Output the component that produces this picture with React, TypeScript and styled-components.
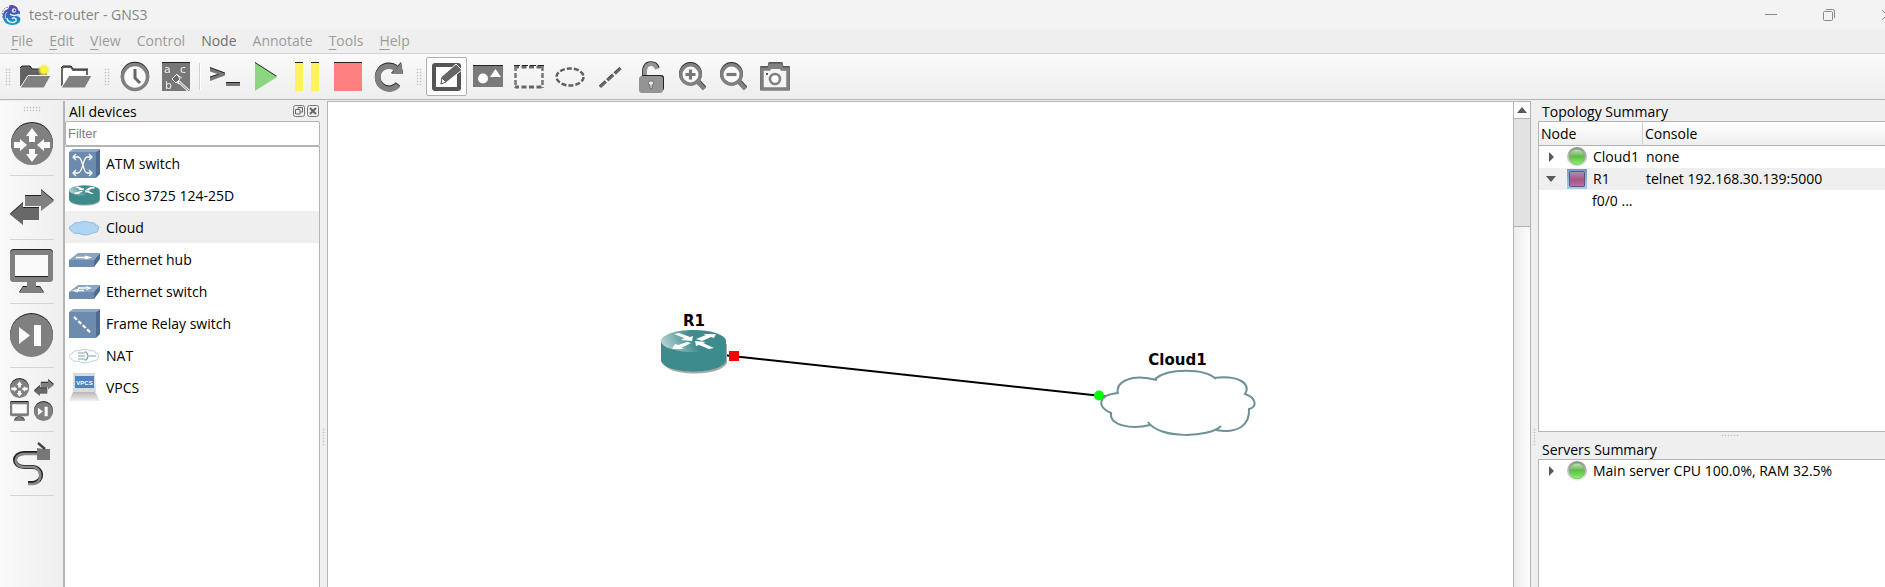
import React from 'react';
import styled, { createGlobalStyle, css } from 'styled-components';

const line = '#b4b4b4';

const GlobalStyle = createGlobalStyle`
  * { box-sizing: border-box; }
  body {
    margin: 0;
    background: #efefef;
    color: #000;
    font: 14px/20px "Open Sans", "Noto Sans", sans-serif;
    overflow: hidden;
  }
  button {
    border: 0;
    padding: 0;
    background: none;
    font: inherit;
    color: inherit;
  }
  svg { display: block; overflow: visible; flex: none; }
`;

const Window = styled.div`
  display: flex;
  flex-direction: column;
  height: 100vh;
  min-width: 900px;
`;

/* ---------- title bar and menu ---------- */

const TitleBar = styled.header`
  display: flex;
  align-items: center;
  gap: 7px;
  height: 29px;
  padding-left: 2px;
  background: #f3f3f3;
  color: #858585;
  overflow: hidden;
`;

const Title = styled.h1`
  flex: 1;
  margin: 0;
  font-size: 14px;
  font-weight: 400;
`;

const WindowButtons = styled.div`
  display: flex;
  margin-right: -31px;
`;

const WindowButton = styled.button`
  display: grid;
  place-items: center;
  width: 58px;
  height: 28px;
`;

const MenuBar = styled.nav`
  display: flex;
  gap: 16px;
  height: 25px;
  padding: 2px 11px;
  border-bottom: 1px solid #d2d2d2;
  background: #efefef;
`;

const MenuItem = styled.button<{ $strong?: boolean }>`
  color: ${(p) => (p.$strong ? '#707070' : '#9c9c9c')};
`;

const Mnemonic = styled.span`
  text-decoration: underline;
  text-underline-offset: 3px;
`;

/* ---------- toolbar ---------- */

const ToolBar = styled.div`
  display: flex;
  align-items: center;
  height: 46px;
  border-bottom: 1px solid ${line};
  background: linear-gradient(#fafafa, #eeeeee);
`;

const dots = css`
  background-image: radial-gradient(circle, #c0c0c0 0 20%, transparent 55%);
  background-size: 3px 3px;
`;

const Grip = styled.div`
  width: 6px;
  height: 18px;
  margin: 0 4px 0 7px;
  ${dots}
  &:first-child { margin: 0 4px 0 5px; }
`;

const ToolSeparator = styled.div`
  width: 2px;
  height: 27px;
  margin: 0 3px;
  border-left: 1px solid #d0d0d0;
  background: #fff;
`;

const ToolButton = styled.button<{ $active?: boolean }>`
  display: grid;
  place-items: center;
  width: 41px;
  height: 39px;
  border: 1px solid ${(p) => (p.$active ? '#b0b0b0' : 'transparent')};
  border-radius: 2px;
  background: ${(p) => (p.$active ? '#fdfdfd' : 'none')};
`;

const Ridge = styled.svg`
  filter: drop-shadow(0 -1px 0 #222);
`;

/* ---------- body ---------- */

const Body = styled.div`
  display: flex;
  flex: 1;
  min-height: 0;
  padding-top: 1px;
`;

const DeviceBar = styled.div`
  display: flex;
  flex-direction: column;
  align-items: center;
  flex: none;
  width: 65px;
  border-right: 2px solid ${line};
  background: linear-gradient(90deg, #fafafa, #eeeeee);
`;

const DeviceGrip = styled.div`
  width: 18px;
  height: 6px;
  margin-top: 5px;
  ${dots}
`;

const DeviceButton = styled.button`
  display: grid;
  place-items: center;
  width: 44px;
  height: 64px;
  border-bottom: 1px solid #d4d4d4;
`;

const MiniGrid = styled.span`
  display: grid;
  grid-template-columns: 20px 20px;
  align-items: center;
  gap: 4px;
`;

const Devices = styled.section`
  display: flex;
  flex-direction: column;
  flex: none;
  width: 255px;
`;

const DockTitle = styled.div`
  display: flex;
  align-items: center;
  gap: 2px;
  height: 20px;
  padding: 0 1px 0 4px;
`;

const DockName = styled.h2`
  flex: 1;
  margin: 0;
  padding-top: 2px;
  font-size: 14px;
  font-weight: 400;
  line-height: 20px;
`;

const Filter = styled.input`
  height: 25px;
  padding: 0 2px;
  border: 1px solid ${line};
  border-radius: 2px;
  outline: 0;
  font: 13px/20px "Liberation Sans", sans-serif;
  &::placeholder { color: #808080; opacity: 1; }
`;

const DeviceList = styled.ul`
  flex: 1;
  margin: 0;
  padding: 0;
  list-style: none;
  border: 1px solid ${line};
  border-left: 0;
  border-bottom: 0;
  background: #fff;
`;

const DeviceRow = styled.li<{ $selected?: boolean }>`
  display: flex;
  align-items: center;
  gap: 6px;
  height: 32px;
  padding: 1px 0 0 4px;
  background: ${(p) => (p.$selected ? '#efefef' : 'none')};
`;

const Splitter = styled.div`
  display: flex;
  justify-content: center;
  flex: none;
  width: 7px;
  padding-top: 327px;
  &::after {
    content: '';
    width: 3px;
    height: 18px;
    ${dots}
  }
`;

/* ---------- canvas ---------- */

const CanvasFrame = styled.main`
  display: flex;
  flex: 1;
  min-width: 0;
  border: 1px solid ${line};
  border-bottom: 0;
  background: #fff;
`;

const Scene = styled.div`
  position: relative;
  flex: 1;
  overflow: hidden;
`;

const Link = styled.svg`
  position: absolute;
  left: 0;
  top: 0;
`;

const Node = styled.div<{ $x: number; $y: number }>`
  position: absolute;
  left: ${(p) => p.$x}px;
  top: ${(p) => p.$y}px;
  display: flex;
  flex-direction: column;
  align-items: center;
  font: bold 15px/18px "DejaVu Sans", sans-serif;
`;

const ScrollBar = styled.div`
  display: flex;
  flex-direction: column;
  flex: none;
  width: 17px;
  border-left: 1px solid ${line};
  background: linear-gradient(90deg, #ededed, #fdfdfd);
`;

const ScrollUp = styled.button`
  display: grid;
  place-items: center;
  height: 17px;
  border-bottom: 1px solid ${line};
  background: #fbfbfb;
`;

const ScrollThumb = styled.div`
  height: 108px;
  border-bottom: 1px solid ${line};
  background: #e2e2e2;
`;

/* ---------- right dock ---------- */

const RightDock = styled.aside`
  display: flex;
  flex-direction: column;
  flex: none;
  width: 347px;
`;

const Panel = styled.div<{ $height?: number }>`
  ${(p) => (p.$height ? `flex: 0 1 ${p.$height}px;` : 'flex: 1;')}
  border: 1px solid ${line};
  border-right: 0;
  ${(p) => (p.$height ? '' : 'border-bottom: 0;')}
  background: #fff;
  overflow: hidden;
`;

const RowGrip = styled.div`
  width: 18px;
  height: 3px;
  margin: 2px 0 2px 183px;
  ${dots}
`;

const Table = styled.table`
  width: 100%;
  border-collapse: separate;
  border-spacing: 0;
  table-layout: fixed;
`;

const HeadCell = styled.th<{ $width?: number }>`
  ${(p) => (p.$width ? `width: ${p.$width}px;` : '')}
  height: 24px;
  padding: 1px 2px 0;
  border-bottom: 1px solid ${line};
  border-left: ${(p) => (p.$width ? '0' : '1px solid #d0d0d0')};
  background: linear-gradient(#ffffff, #eeeeee);
  font-weight: 400;
  text-align: left;
`;

const Row = styled.tr<{ $selected?: boolean }>`
  background: ${(p) => (p.$selected ? '#efefef' : 'none')};
`;

const Cell = styled.td`
  height: 22px;
  padding: 0 0 0 4px;
  white-space: nowrap;
`;

const TreeCell = styled.div<{ $child?: boolean }>`
  display: flex;
  align-items: center;
  gap: 6px;
  height: ${(p) => (p.$child ? '20px' : '22px')};
  padding-left: ${(p) => (p.$child ? '49px' : '0')};
`;

const ServerRow = styled(TreeCell)`
  padding-left: 4px;
`;

const Expander = styled.button`
  display: grid;
  place-items: center;
  width: 16px;
  height: 20px;
  margin-right: 2px;
`;

/* ---------- drawings ---------- */

const G = '#808080';

const Logo = () => (
  <svg width="20" height="22" viewBox="0 0 20 22" aria-hidden="true">
    <defs>
      <linearGradient id="logo" x1="0" y1="0" x2="0" y2="1">
        <stop offset="0" stopColor="#6a3bb5" />
        <stop offset="0.5" stopColor="#3468b4" />
        <stop offset="1" stopColor="#10a5c8" />
      </linearGradient>
    </defs>
    <path d="M8 1C13 1 16 3 16 6c2 1 3 3 1 5l-3 1c4 0 5 3 4 5-1 3-5 4-8 4C4 21 1 17 1 12 1 8 3 6 6 5 7 4 7 2 8 1z" fill="url(#logo)" />
    <path d="M1 14c-2-5 0-10 5-11l3-2" fill="none" stroke="#8d7cd0" strokeWidth="1" strokeDasharray="2 1" />
    <circle cx="12" cy="6.500" r="2.200" fill="#dfe6f6" />
    <circle cx="12.500" cy="6.500" r="1" fill="#3b4aa8" />
    <path d="M8 10c2 2 6 2 9 0M5 14c0 4 6 6 9 3 1-3-3-4-4-2" fill="none" stroke="#eef6fb" strokeWidth="1.300" />
    <path d="M5 8c-2 2-2 5-1 7" fill="none" stroke="#cbd9f3" strokeWidth="1" />
  </svg>
);

const FolderBack = ({ solid }: { solid?: boolean }) => (
  <>
    <path d="M1 20V3l1-2h8l2 3h14v6" fill={solid ? '#626262' : '#fff'} stroke="#666" strokeWidth="2" />
    <path d="M0 2l2-2h8l2 3h15" fill="none" stroke="#2b2b2b" strokeWidth="1" />
    <path d="M8 9.500h23L24 22H0z" fill={G} stroke="#f4f4f4" strokeWidth="1" />
  </>
);

const NewFolder = () => (
  <svg width="31" height="22" viewBox="0 0 31 22">
    <defs>
      <radialGradient id="glow">
        <stop offset="0" stopColor="#fdf83a" />
        <stop offset="0.500" stopColor="#f8ee3c" />
        <stop offset="1" stopColor="#f5ee50" stopOpacity="0" />
      </radialGradient>
    </defs>
    <FolderBack solid />
    <circle cx="24" cy="4" r="6.500" fill="url(#glow)" />
  </svg>
);

const OpenFolder = () => (
  <svg width="31" height="22" viewBox="0 0 31 22"><FolderBack /></svg>
);

const Clock = () => (
  <Ridge width="28" height="28" viewBox="0 0 28 28">
    <circle cx="14" cy="14" r="12.500" fill="#fafafa" stroke={G} strokeWidth="3.500" />
    <path d="M14 6v9l5 5" fill="none" stroke="#666" strokeWidth="3" />
  </Ridge>
);

const Labels = () => (
  <Ridge width="28" height="28" viewBox="0 0 28 28">
    <path d="M0 0h28v28H0z" fill="#777" />
    <g fill="#eee" fontFamily="DejaVu Sans" fontSize="11">
      <text x="2" y="10">a</text>
      <text x="18" y="10">c</text>
      <text x="3" y="26">b</text>
    </g>
    <path d="M16 18l11 10" stroke="#eee" strokeWidth="3" />
    <path d="M17 19l10 9" stroke={G} strokeWidth="1" />
    <path d="M10 16l5-5 3 5-4 4z" fill="#6b6b6b" stroke="#eee" strokeWidth="1" />
    <path d="M15 12l5 3M14 19l3 2" stroke="#eee" strokeWidth="1" />
  </Ridge>
);

const Console = () => (
  <Ridge width="30" height="20" viewBox="0 0 30 20">
    <path d="M0 1l15 5.500v2L0 14v-3.500L9 7.500 0 4.500zM16 16h14v3H16z" fill="#777" />
  </Ridge>
);

const Play = () => (
  <Ridge width="22" height="28" viewBox="0 0 22 28"><path d="M0 0l22 14L0 28z" fill="#8bd67e" /></Ridge>
);
const Pause = () => (
  <Ridge width="24" height="28" viewBox="0 0 24 28"><path d="M0 0h8v28H0zM16 0h8v28h-8z" fill="#fff358" /></Ridge>
);
const Stop = () => (
  <Ridge width="28" height="28" viewBox="0 0 28 28"><path d="M0 0h28v28H0z" fill="#ff8080" /></Ridge>
);
const Reload = () => (
  <Ridge width="28" height="30" viewBox="0 0 28 30">
    <path d="M21 6.500A11.500 11.500 0 1 0 23 23" fill="none" stroke={G} strokeWidth="5.500" />
    <path d="M26 1l2 11H16z" fill={G} />
  </Ridge>
);

const Annotate = () => (
  <svg width="30" height="28" viewBox="0 0 30 28">
    <rect x="2" y="2" width="25" height="24" rx="1" fill="#fdfdfd" stroke="#555" strokeWidth="4" />
    <path d="M9 14l15-13 6 6-15 12-7 3z" fill="#666" stroke="#fff" strokeWidth="1" />
    <path d="M10 15l4 4-5 2z" fill="#fff" stroke="#555" strokeWidth="1" />
  </svg>
);
const Picture = () => (
  <Ridge width="30" height="21" viewBox="0 0 30 21">
    <path d="M0 0h30v21H0z" fill="#7a7a7a" />
    <circle cx="10" cy="12.500" r="5" fill="#fff" />
    <path d="M17 11l5.500-8 5.500 8z" fill="#fff" />
  </Ridge>
);
const RectTool = () => (
  <svg width="30" height="24" viewBox="0 0 30 24">
    <path d="M1 2h28M1 22h28" stroke="#666" strokeWidth="3" strokeDasharray="5 2.500" strokeDashoffset="1" />
    <path d="M1.500 1v22M28.500 1v22" stroke="#777" strokeWidth="2.500" strokeDasharray="5 2" />
    <path d="M0 .5h30" stroke="#222" strokeDasharray="6 2" />
  </svg>
);
const EllipseTool = () => (
  <svg width="30" height="20" viewBox="0 0 30 20">
    <ellipse cx="15" cy="10" rx="13.500" ry="8.500" fill="none" stroke="#606060" strokeWidth="2.500" strokeDasharray="5 2" />
  </svg>
);
const LineTool = () => (
  <svg width="24" height="22" viewBox="0 0 24 22">
    <path d="M1 21L23 1" stroke="#666" strokeWidth="3" strokeDasharray="8 2" />
    <path d="M0 20L22 0" stroke="#222" strokeWidth="0.700" strokeDasharray="8 2" />
  </svg>
);
const Lock = () => (
  <svg width="25" height="32" viewBox="0 0 25 32">
    <path d="M5 15c-1-8 1-13 7-13 3 0 6 2 7 5" fill="none" stroke="#222" strokeWidth="3.500" />
    <path d="M6 15C5 8 7 3 12 3c3 0 5 2 6 5" fill="none" stroke="#949494" strokeWidth="4" />
    <rect x="2" y="14" width="23" height="16" rx="3" fill="#222" />
    <rect x="0" y="15" width="24" height="17" rx="3" fill="#949494" />
    <path d="M12 20a2 2 0 0 1 1 4v4l-2-1v-3a2 2 0 0 1 1-4z" fill="#e8e8e8" stroke="#444" strokeWidth="0.600" />
  </svg>
);
const Zoom = ({ plus }: { plus?: boolean }) => (
  <Ridge width="27" height="27" viewBox="0 0 27 27">
    <path d="M18 18l7.500 8" stroke={G} strokeWidth="4.500" />
    <circle cx="11.500" cy="11.500" r="9.700" fill="#fafafa" stroke={G} strokeWidth="3.500" />
    <path d={plus ? 'M6.500 11.500h10M11.500 6.500v10' : 'M6.500 11.500h10'} stroke="#777" strokeWidth="3.200" />
  </Ridge>
);
const Camera = () => (
  <Ridge width="30" height="28" viewBox="0 0 30 28">
    <path d="M2 6h7l1-4h11l1 4h6v20H2z" fill="#f4f4f4" stroke={G} strokeWidth="3.500" />
    <path d="M9 1h13v5H9z" fill={G} />
    <circle cx="15" cy="16" r="5" fill="#fff" stroke={G} strokeWidth="2.600" />
    <path d="M6 10h2v2H6z" fill="#555" />
  </Ridge>
);

const RouterIcon = ({ size = 42 }: { size?: number }) => (
  <Ridge width={size} height={size} viewBox="0 0 42 42">
    <circle cx="21" cy="21" r="21" fill={G} />
    <path d="M21 5l6 8h-3v6h-6v-6h-3zM21 39l6-8h-3v-5h-6v5h-3zM16 22l-7-6v3H3v6h6v3zM26 22l7-6v3h6v6h-6v3z" fill="#fafafa" />
  </Ridge>
);
const SwitchIcon = ({ size = 44 }: { size?: number }) => (
  <Ridge width={size} height={size * 0.8} viewBox="0 0 44 35">
    <path d="M15 6h16V0l13 11-13 10v-5H15z" fill={G} />
    <path d="M29 18H13v-5L0 24.500 13 35v-5h16z" fill="#686868" />
  </Ridge>
);
const MonitorIcon = ({ size = 43 }: { size?: number }) => (
  <Ridge width={size} height={size} viewBox="0 0 43 43">
    <rect x="2.500" y="2.500" width="38" height="27" rx="1" fill="#fafafa" stroke={G} strokeWidth="5" />
    <path d="M17 32h9v5h4l4 6H9l4-6h4z" fill={G} />
    <path d="M5 26.500h33" stroke="#222" strokeWidth="1" />
  </Ridge>
);
const SkipIcon = ({ size = 43 }: { size?: number }) => (
  <Ridge width={size} height={size} viewBox="0 0 43 43">
    <circle cx="21.500" cy="21.500" r="21.500" fill={G} />
    <path d="M9 13v17l11-8.500zM24 11h7v21h-7z" fill="#fafafa" />
  </Ridge>
);
const CableIcon = () => (
  <svg width="38" height="44" viewBox="0 0 38 44">
    <path d="M27 11H11C-1 11-1 25 11 25h8c12 0 12 15 1 16h-5" fill="none" stroke="#222" strokeWidth="4" />
    <path d="M27 12H11C0 12 0 25 11 25h8c11 0 11 16 1 17h-5" fill="none" stroke="#8a8a8a" strokeWidth="2.500" />
    <path d="M24 6l6 1h7v11H24z" fill="#777" />
    <path d="M25 1l7 6" stroke="#444" strokeWidth="2.500" />
  </svg>
);

const CubeIcon = ({ relay }: { relay?: boolean }) => (
  <svg width="31" height="29" viewBox="0 0 31 29">
    <path d="M0 3l4-3h27l-4 3z" fill="#8ba7c6" />
    <path d="M27 3l4-3v25l-4 4z" fill="#4e6c92" />
    <path d="M0 3h27v26H0z" fill="#6d8bae" />
    {relay ? (
      <path d="M5 8l17 16" stroke="#fff" strokeWidth="2.200" strokeDasharray="4 2" />
    ) : (
      <g fill="none" stroke="#fff" strokeWidth="1.300">
        <path d="M4 8h5c5 0 5 16 9 16h5M4 24h5c5 0 5-16 9-16h5" />
        <path d="M7 5L4 8l3 3M20 5l3 3-3 3M7 21l-3 3 3 3M20 21l3 3-3 3" />
      </g>
    )}
  </svg>
);

const RouterDevice = ({ width, height, id }: { width: number; height: number; id: string }) => (
  <svg width={width} height={height} viewBox="0 0 66 44">
    <defs>
      <linearGradient id={id} x1="0" y1="0.500" x2="0.500" y2="0.400">
        <stop offset="0" stopColor="#b3d1d1" />
        <stop offset="1" stopColor="#3d8b8b" />
      </linearGradient>
    </defs>
    <path d="M2 13v20c5 14 58 14 64 0V14z" fill="#a9a9a9" />
    <path d="M0 11v20c5 14 60 14 65 0V11z" fill="#3d8b8b" />
    <ellipse cx="32.500" cy="11" rx="32.500" ry="11" fill={`url(#${id})`} />
    <path d="M13 4l5-1 11 4 3-1-1 5-11-1 3-2zM35 9l10-4-3-1 13 0-2 4-3-1-9 4zM11 19l3-5 3 1 9-3 4 1-10 5 4 1zM34 11l11 1-3 1 11 5-5 1-10-4-3 1z" fill="#fff" />
  </svg>
);

const SmallCloud = ({ fill, stroke, children }: { fill: string; stroke: string; children?: React.ReactNode }) => (
  <svg width="31" height="14" viewBox="0 0 31 14">
    <path d="M4 4C4 2 8 1 10 2c2-2 9-2 11 0 3-1 6 0 5 2 3 0 5 2 3 4 1 3-3 4-6 4-2 2-10 3-13 0-3 1-7 0-7-2C0 9-1 5 4 4z" fill={fill} stroke={stroke} />
    {children}
  </svg>
);

const NatIcon = () => (
  <SmallCloud fill="#fff" stroke="#b5cfd3">
    <path d="M9 4h7M9 7h7M9 10h7M16 2.500c4 2 4 7 0 9M20 7h7" fill="none" stroke="#7da4a9" strokeWidth="1.200" />
  </SmallCloud>
);

const SlabIcon = ({ two }: { two?: boolean }) => (
  <svg width="31" height="14" viewBox="0 0 31 14">
    <path d="M0 7L9 0h22l-6 7z" fill="#8aa4c3" />
    <path d="M25 7l6-7v6l-6 8z" fill="#4d6b91" />
    <path d="M0 7h25v7H0z" fill="#6d8bae" />
    <path d={two ? 'M9 3h8M17 2l4 1-4 1.500M15 5.500H8M10 4L5 5.500 9 7' : 'M7 4.500h12M16 3l5 1.500-5 1.500'} fill="none" stroke="#fff" strokeWidth="1.300" />
  </svg>
);

const VpcsIcon = () => (
  <svg width="31" height="29" viewBox="0 0 31 29">
    <defs>
      <linearGradient id="laptop" x1="0" y1="0" x2="0" y2="1">
        <stop offset="0" stopColor="#b8b8b8" />
        <stop offset="1" stopColor="#efefef" />
      </linearGradient>
    </defs>
    <path d="M4 0h22l1 19H4z" fill="#d8dcde" />
    <path d="M6 3h19v12H6z" fill="#4a86bd" />
    <path d="M4 19h22l5 9H0z" fill="url(#laptop)" />
    <text x="15.500" y="12" textAnchor="middle" fontFamily="Liberation Sans" fontWeight="700" fontSize="6" fill="#fff">VPCS</text>
  </svg>
);

const Led = ({ id }: { id: string }) => (
  <svg width="20" height="20" viewBox="0 0 20 20">
    <defs>
      <linearGradient id={id} x1="0" y1="0" x2="0" y2="1">
        <stop offset="0" stopColor="#c4e6ba" />
        <stop offset="0.450" stopColor="#62b94e" />
        <stop offset="1" stopColor="#86f766" />
      </linearGradient>
      <linearGradient id={`${id}r`} x1="0" y1="0" x2="0" y2="1">
        <stop offset="0" stopColor="#8c8c8c" />
        <stop offset="1" stopColor="#f2f2f2" />
      </linearGradient>
    </defs>
    <circle cx="10" cy="10" r="10" fill={`url(#${id}r)`} />
    <circle cx="10" cy="10" r="7.800" fill={`url(#${id})`} stroke="#78a86c" strokeWidth="0.600" />
  </svg>
);

const StoppedLed = () => (
  <svg width="20" height="20" viewBox="0 0 20 20">
    <defs>
      <linearGradient id="stopO" x1="0" y1="0" x2="0" y2="1">
        <stop offset="0" stopColor="#6f9cc4" />
        <stop offset="1" stopColor="#a6cdee" />
      </linearGradient>
      <linearGradient id="stopI" x1="0" y1="0" x2="0" y2="1">
        <stop offset="0" stopColor="#a992b8" />
        <stop offset="0.550" stopColor="#a35682" />
        <stop offset="1" stopColor="#b873a6" />
      </linearGradient>
    </defs>
    <path d="M0 0h20v20H0z" fill="url(#stopO)" />
    <rect x="2.500" y="2.500" width="15" height="15" rx="1" fill="url(#stopI)" stroke="#66507c" />
  </svg>
);

const TitleGlyph = ({ close }: { close?: boolean }) => (
  <svg width="12" height="12" viewBox="0 0 12 12" fill="none" stroke="#666">
    <rect x="0.500" y="0.500" width="11" height="11" rx="2" stroke="#777" />
    {close ? <path d="M3 3l6 6M9 3L3 9" strokeWidth="2" /> : <path d="M5 5V2.500h4.500V7H7M2.500 4.500H7V9H2.500z" />}
  </svg>
);

const Triangle = ({ open }: { open?: boolean }) => (
  <svg width="10" height="10" viewBox="0 0 10 10">
    <path d={open ? 'M0 2h10L5 8z' : 'M3 0l5 5-5 5z'} fill="#5a5a5a" />
  </svg>
);

const menus = ['File', 'Edit', 'View', 'Control', 'Node', 'Annotate', 'Tools', 'Help'];
const plainMenus = ['Control', 'Node', 'Annotate'];

const devices = [
  { name: 'ATM switch', icon: <CubeIcon /> },
  { name: 'Cisco 3725 124-25D', icon: <RouterDevice width={31} height={21} id="smallRouter" /> },
  { name: 'Cloud', icon: <SmallCloud fill="#b0d5f3" stroke="#8db9dd" /> },
  { name: 'Ethernet hub', icon: <SlabIcon /> },
  { name: 'Ethernet switch', icon: <SlabIcon two /> },
  { name: 'Frame Relay switch', icon: <CubeIcon relay /> },
  { name: 'NAT', icon: <NatIcon /> },
  { name: 'VPCS', icon: <VpcsIcon /> },
];

const fileTools = [
  { name: 'New project', icon: <NewFolder /> },
  { name: 'Open project', icon: <OpenFolder /> },
];
const viewTools = [
  { name: 'Snapshots', icon: <Clock /> },
  { name: 'Show interface labels', icon: <Labels /> },
];
const runTools = [
  { name: 'Console to all', icon: <Console /> },
  { name: 'Start', icon: <Play /> },
  { name: 'Suspend', icon: <Pause /> },
  { name: 'Stop', icon: <Stop /> },
  { name: 'Reload', icon: <Reload /> },
];
const drawTools = [
  { name: 'Add note', icon: <Annotate />, active: true },
  { name: 'Insert picture', icon: <Picture /> },
  { name: 'Draw rectangle', icon: <RectTool /> },
  { name: 'Draw ellipse', icon: <EllipseTool /> },
  { name: 'Draw line', icon: <LineTool /> },
  { name: 'Lock items', icon: <Lock /> },
  { name: 'Zoom in', icon: <Zoom plus /> },
  { name: 'Zoom out', icon: <Zoom /> },
  { name: 'Screenshot', icon: <Camera /> },
];

type Tool = { name: string; icon: React.ReactNode; active?: boolean };
const Tools = ({ items }: { items: Tool[] }) => (
  <>
    {items.map((t) => (
      <ToolButton key={t.name} aria-label={t.name} $active={t.active}>{t.icon}</ToolButton>
    ))}
  </>
);

export default function App() {
  return (
    <Window>
      <GlobalStyle />
      <TitleBar>
        <Logo />
        <Title>test-router - GNS3</Title>
        <WindowButtons>
          <WindowButton aria-label="Minimize">
            <svg width="12" height="12" viewBox="0 0 12 12"><path d="M0 5.500h12" stroke="#888" /></svg>
          </WindowButton>
          <WindowButton aria-label="Restore">
            <svg width="12" height="12" viewBox="0 0 12 12" fill="none" stroke="#888">
              <rect x="0.500" y="2.500" width="9" height="9" rx="1" />
              <path d="M3 .5h6.500a2 2 0 0 1 2 2V9" />
            </svg>
          </WindowButton>
          <WindowButton aria-label="Close">
            <svg width="12" height="12" viewBox="0 0 12 12"><path d="M1 1l10 10M11 1L1 11" stroke="#888" /></svg>
          </WindowButton>
        </WindowButtons>
      </TitleBar>
      <MenuBar>
        {menus.map((m) => (
          <MenuItem key={m} $strong={m === 'Node'}>
            {plainMenus.includes(m) ? m : <><Mnemonic>{m[0]}</Mnemonic>{m.slice(1)}</>}
          </MenuItem>
        ))}
      </MenuBar>
      <ToolBar>
        <Grip />
        <Tools items={fileTools} />
        <Grip />
        <Tools items={viewTools} />
        <ToolSeparator />
        <Tools items={runTools} />
        <Grip />
        <Tools items={drawTools} />
      </ToolBar>
      <Body>
        <DeviceBar>
          <DeviceGrip />
          <DeviceButton aria-label="Routers"><RouterIcon /></DeviceButton>
          <DeviceButton aria-label="Switches"><SwitchIcon /></DeviceButton>
          <DeviceButton aria-label="End devices"><MonitorIcon /></DeviceButton>
          <DeviceButton aria-label="Security devices"><SkipIcon /></DeviceButton>
          <DeviceButton aria-label="All devices">
            <MiniGrid>
              <RouterIcon size={19} />
              <SwitchIcon size={20} />
              <MonitorIcon size={19} />
              <SkipIcon size={19} />
            </MiniGrid>
          </DeviceButton>
          <DeviceButton aria-label="Add a link"><CableIcon /></DeviceButton>
        </DeviceBar>
        <Devices>
          <DockTitle>
            <DockName>All devices</DockName>
            <button aria-label="Float panel"><TitleGlyph /></button>
            <button aria-label="Close panel"><TitleGlyph close /></button>
          </DockTitle>
          <Filter placeholder="Filter" aria-label="Filter devices" />
          <DeviceList>
            {devices.map((d) => (
              <DeviceRow key={d.name} $selected={d.name === 'Cloud'}>{d.icon}{d.name}</DeviceRow>
            ))}
          </DeviceList>
        </Devices>
        <Splitter />
        <CanvasFrame>
          <Scene>
            <Link width="1000" height="400" viewBox="0 0 1000 400">
              <path d="M390 252.500L783 295" stroke="#000" strokeWidth="2" />
            </Link>
            <Node $x={333} $y={210}>
              R1
              <RouterDevice width={66} height={44} id="bigRouter" />
            </Node>
            <Node $x={773} $y={249}>
              Cloud1
              <svg width="153" height="68" viewBox="0 0 153 68">
                <path
                  d="M17 25C14 13 30 4 56 11M54 10C67-1 103-1 115 10M113 9c23-3 38 5 31 16 12 4 12 13 4 15 1 16-11 25-33 21M120 57c-12 12-62 13-73-4M49 56C30 61 8 56 10 44-4 38-4 26 17 24"
                  fill="#fff" stroke="#6c9298" strokeWidth="2"
                />
              </svg>
            </Node>
            <Link width="1000" height="400" viewBox="0 0 1000 400">
              <path d="M401 249h10v10h-10z" fill="#f00" />
              <circle cx="771" cy="293.500" r="5" fill="#0f0" />
            </Link>
          </Scene>
          <ScrollBar>
            <ScrollUp aria-label="Scroll up">
              <svg width="10" height="6" viewBox="0 0 10 6"><path d="M0 6l5-6 5 6z" fill="#5a5a5a" /></svg>
            </ScrollUp>
            <ScrollThumb />
          </ScrollBar>
        </CanvasFrame>
        <Splitter />
        <RightDock>
          <DockTitle><DockName>Topology Summary</DockName></DockTitle>
          <Panel $height={311}>
            <Table>
              <thead>
                <tr>
                  <HeadCell $width={103}>Node</HeadCell>
                  <HeadCell>Console</HeadCell>
                </tr>
              </thead>
              <tbody>
                <Row>
                  <Cell>
                    <TreeCell><Expander aria-label="Expand Cloud1"><Triangle /></Expander><Led id="led1" />Cloud1</TreeCell>
                  </Cell>
                  <Cell>none</Cell>
                </Row>
                <Row $selected>
                  <Cell>
                    <TreeCell><Expander aria-label="Collapse R1"><Triangle open /></Expander><StoppedLed />R1</TreeCell>
                  </Cell>
                  <Cell>telnet 192.168.30.139:5000</Cell>
                </Row>
                <Row>
                  <Cell><TreeCell $child>f0/0 ...</TreeCell></Cell>
                  <Cell />
                </Row>
              </tbody>
            </Table>
          </Panel>
          <RowGrip />
          <DockTitle><DockName>Servers Summary</DockName></DockTitle>
          <Panel>
            <ServerRow>
              <Expander aria-label="Expand main server"><Triangle /></Expander>
              <Led id="led2" />
              Main server CPU 100.0%, RAM 32.5%
            </ServerRow>
          </Panel>
        </RightDock>
      </Body>
    </Window>
  );
}
